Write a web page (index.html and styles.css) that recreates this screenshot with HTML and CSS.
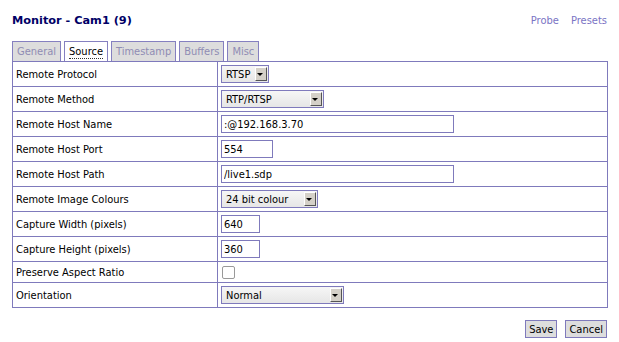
FILE: index.html
```html
<!DOCTYPE html>
<html lang="en">
<head>
    <meta charset="UTF-8">
    <title>Monitor - Cam1 (9)</title>
    <link rel="stylesheet" href="styles.css">
</head>
<body>
    <div class="page">
        <div class="header">
            <h2 class="title">Monitor - Cam1 (9)</h2>
            <div class="links">
                <a href="#">Probe</a>
                <a href="#">Presets</a>
            </div>
        </div>

        <ul class="tabs">
            <li class="tab">General</li>
            <li class="tab active"><span>Source</span></li>
            <li class="tab">Timestamp</li>
            <li class="tab">Buffers</li>
            <li class="tab">Misc</li>
        </ul>

        <table class="content">
            <tr class="row">
                <td class="label">Remote Protocol</td>
                <td><span class="select w48"><select><option>RTSP</option></select></span></td>
            </tr>
            <tr class="row">
                <td class="label">Remote Method</td>
                <td><span class="select w103"><select><option>RTP/RTSP</option></select></span></td>
            </tr>
            <tr class="row">
                <td class="label">Remote Host Name</td>
                <td><input class="text wide" type="text" value=":@192.168.3.70"></td>
            </tr>
            <tr class="row">
                <td class="label">Remote Host Port</td>
                <td><input class="text port" type="text" value="554"></td>
            </tr>
            <tr class="row">
                <td class="label">Remote Host Path</td>
                <td><input class="text wide" type="text" value="/live1.sdp"></td>
            </tr>
            <tr class="row">
                <td class="label">Remote Image Colours</td>
                <td><span class="select w97"><select><option>24 bit colour</option></select></span></td>
            </tr>
            <tr class="row">
                <td class="label">Capture Width (pixels)</td>
                <td><input class="text small" type="text" value="640"></td>
            </tr>
            <tr class="row">
                <td class="label">Capture Height (pixels)</td>
                <td><input class="text small" type="text" value="360"></td>
            </tr>
            <tr class="row short">
                <td class="label">Preserve Aspect Ratio</td>
                <td><span class="check"></span></td>
            </tr>
            <tr class="row">
                <td class="label">Orientation</td>
                <td><span class="select w123"><select><option>Normal</option></select></span></td>
            </tr>
        </table>

        <div class="actions">
            <button class="btn">Save</button>
            <button class="btn">Cancel</button>
        </div>
    </div>
</body>
</html>
```

FILE: styles.css
```css
body {
    margin: 0;
    font-family: "DejaVu Sans Condensed", "DejaVu Sans", sans-serif;
    font-size: 11px;
    color: #000;
    background: #fff;
}
.page {
    padding: 12px 12px 0 12px;
}
.header {
    display: flex;
    justify-content: space-between;
    align-items: center;
    height: 17px;
}
.title {
    margin: 0;
    font-family: "DejaVu Sans", sans-serif;
    font-size: 11.3px;
    font-weight: bold;
    color: #000066;
}
.links a {
    color: #7a74c4;
    text-decoration: none;
    margin-left: 9px;
}
.tabs {
    list-style: none;
    margin: 12px 0 0 0;
    padding: 0;
    display: flex;
    gap: 3px;
}
.tab {
    height: 19px;
    line-height: 19px;
    padding: 0 4px;
    border: 1px solid #8580c0;
    border-bottom: none;
    background: #dddddd;
    color: #8f8cb4;
}
.tab.active {
    background: #fff;
    color: #000;
}
.tab.active span {
    border-bottom: 1px dotted #333;
}
.content {
    border-collapse: collapse;
    width: 596px;
}
.content td {
    border: 1px solid #7f7abc;
    padding: 0 3px;
    height: 24px;
}
.content td.label {
    width: 198px;
}
.row.short td {
    height: 20px;
}
.text {
    box-sizing: border-box;
    height: 18px;
    border: 1px solid #7f7abc;
    font-family: inherit;
    font-size: 11px;
    padding: 0 2px;
    margin: 0;
    display: block;
}
.wide {
    width: 233px;
}
.port {
    width: 52px;
}
.small {
    width: 39px;
}
.select {
    position: relative;
    display: block;
    height: 18px;
}
.select select {
    appearance: none;
    box-sizing: border-box;
    width: 100%;
    height: 18px;
    border: 1px solid #7f7abc;
    background: linear-gradient(#f6f6f6, #e6e6e6);
    font-family: inherit;
    font-size: 11px;
    padding: 0 4px;
    margin: 0;
    color: #000;
}
.select::after {
    content: "";
    position: absolute;
    right: 2px;
    top: 2px;
    width: 12px;
    height: 14px;
    box-sizing: border-box;
    border-top: 1px solid #fff;
    border-left: 1px solid #fff;
    border-right: 1px solid #555;
    border-bottom: 1px solid #555;
    background: #d4d0c8;
}
.select::before {
    content: "";
    position: absolute;
    right: 6px;
    top: 8px;
    border-left: 3px solid transparent;
    border-right: 3px solid transparent;
    border-top: 3px solid #000;
    z-index: 1;
}
.w48 { width: 48px; }
.w103 { width: 103px; }
.w97 { width: 97px; }
.w123 { width: 123px; }
.check {
    display: block;
    width: 11px;
    height: 11px;
    margin-left: 1px;
    border: 1px solid #999;
    border-radius: 2px;
    background: #fff;
}
.actions {
    display: flex;
    justify-content: flex-end;
    gap: 8px;
    margin-top: 12px;
}
.btn {
    height: 18px;
    padding: 0 3px;
    font-family: inherit;
    font-size: 11px;
    border: 1px solid #7f7abc;
    background: #dddddd;
    color: #000;
}
```
